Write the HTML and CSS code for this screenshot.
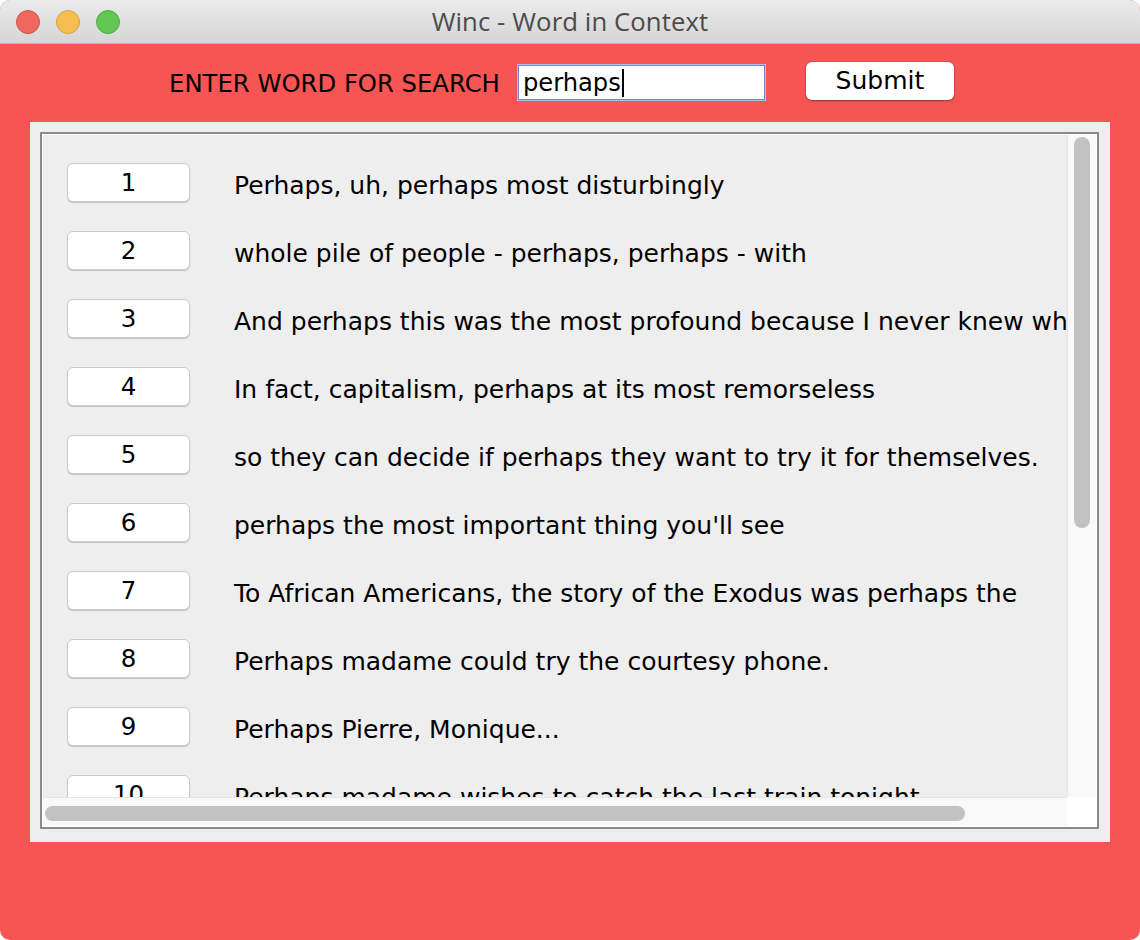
FILE: index.html
```html
<!DOCTYPE html>
<html>
<head>
<meta charset="utf-8">
<title>Winc - Word in Context</title>
<link rel="stylesheet" href="styles.css">
</head>
<body>
<div class="window">
  <div class="titlebar">
    <div class="lights">
      <span class="light red"></span>
      <span class="light yellow"></span>
      <span class="light green"></span>
    </div>
    <div class="title">Winc - Word in Context</div>
    <div></div>
  </div>
  <div class="search">
    <span class="label">ENTER WORD FOR SEARCH</span>
    <div class="input"><span>perhaps</span><span class="caret"></span></div>
    <button class="submit">Submit</button>
  </div>
  <div class="panel">
    <div class="scrollpane">
      <div class="viewport">
        <div class="row"><button class="num">1</button><span class="text">Perhaps, uh, perhaps most disturbingly</span></div>
        <div class="row"><button class="num">2</button><span class="text">whole pile of people - perhaps, perhaps - with</span></div>
        <div class="row"><button class="num">3</button><span class="text">And perhaps this was the most profound because I never knew what it meant</span></div>
        <div class="row"><button class="num">4</button><span class="text">In fact, capitalism, perhaps at its most remorseless</span></div>
        <div class="row"><button class="num">5</button><span class="text">so they can decide if perhaps they want to try it for themselves.</span></div>
        <div class="row"><button class="num">6</button><span class="text">perhaps the most important thing you'll see</span></div>
        <div class="row"><button class="num">7</button><span class="text">To African Americans, the story of the Exodus was perhaps the</span></div>
        <div class="row"><button class="num">8</button><span class="text">Perhaps madame could try the courtesy phone.</span></div>
        <div class="row"><button class="num">9</button><span class="text">Perhaps Pierre, Monique...</span></div>
        <div class="row"><button class="num">10</button><span class="text">Perhaps madame wishes to catch the last train tonight.</span></div>
      </div>
      <div class="vbar"><div class="vthumb"></div></div>
      <div class="hbar"><div class="hthumb"></div></div>
      <div class="corner"></div>
    </div>
  </div>
</div>
</body>
</html>
```

FILE: styles.css
```css
html, body {
  margin: 0;
  padding: 0;
  background: #ffffff;
}

body {
  font-family: "DejaVu Sans", "Liberation Sans", sans-serif;
  color: #000;
}

.window {
  width: 1140px;
  height: 940px;
  border-radius: 10px;
  overflow: hidden;
  background: #f75454;
  display: flex;
  flex-direction: column;
}

.titlebar {
  height: 43px;
  flex: none;
  background: linear-gradient(#ebebeb, #d5d5d5);
  border-bottom: 1px solid #b8b8b8;
  display: grid;
  grid-template-columns: 1fr auto 1fr;
  align-items: center;
}

.lights {
  display: flex;
  gap: 16px;
  padding-left: 16px;
}

.light {
  width: 22px;
  height: 22px;
  border-radius: 50%;
  display: block;
}

.light.red { background: #ee6a5f; border: 1px solid #d3524a; }
.light.yellow { background: #f6be50; border: 1px solid #d9a240; }
.light.green { background: #62c655; border: 1px solid #4fa940; }

.title {
  font-family: "Open Sans", "Liberation Sans", sans-serif;
  font-size: 25.7px;
  color: #4b4b4b;
  letter-spacing: 0.1px;
}

.search {
  height: 78px;
  flex: none;
  display: flex;
  align-items: center;
  justify-content: center;
  padding-right: 17px;
  padding-bottom: 5px;
  box-sizing: border-box;
}

.label {
  font-size: 24.3px;
  margin-right: 18px;
  margin-top: 5px;
}

.input {
  background: #fff;
  border: 1px solid #7d86c4;
  box-shadow: 0 0 0 1px #a8c2ee;
  display: flex;
  align-items: center;
  padding-left: 4px;
  margin-right: 41px;
  margin-top: 4px;
  font-size: 24.2px;
  box-sizing: border-box;
  width: 247px;
  height: 35px;
}

.caret {
  width: 2px;
  height: 28px;
  background: #000;
  margin-left: 1px;
}

.submit {
  width: 148px;
  height: 38px;
  background: #fff;
  border: none;
  border-radius: 6px;
  box-shadow: 0 1px 2px rgba(0, 0, 0, 0.35), 0 0 0 0.5px rgba(0, 0, 0, 0.15);
  font-family: inherit;
  font-size: 25px;
  color: #000;
  padding: 0;
}

.panel {
  margin: 0 30px;
  height: 720px;
  background: #eeeeee;
  padding: 10px 11px 13px 10px;
  box-sizing: border-box;
}

.scrollpane {
  height: 100%;
  border: 2px solid #8a8a8a;
  box-shadow: inset 0 0 0 1px #ffffff;
  padding: 1px;
  box-sizing: border-box;
  display: grid;
  grid-template-columns: 1fr 29px;
  grid-template-rows: 1fr 29px;
  background: #eeeeee;
}

.viewport {
  overflow: hidden;
  padding: 28px 0 0 24px;
  background: #eeeeee;
}

.row {
  display: flex;
  align-items: center;
  height: 38px;
  margin-bottom: 30px;
  white-space: nowrap;
}

.num {
  flex: none;
  width: 123px;
  height: 39px;
  background: #fff;
  border: 1px solid #cbcbcb;
  border-radius: 6px;
  box-shadow: 0 1px 1px rgba(0, 0, 0, 0.18);
  font-family: inherit;
  font-size: 24.5px;
  color: #000;
  padding: 0;
  margin-right: 44px;
}

.text {
  font-size: 25px;
  margin-top: 6px;
}

.vbar {
  background: #f9f9f9;
  border-left: 1px solid #e6e6e6;
  position: relative;
}

.vthumb {
  position: absolute;
  left: 6px;
  top: 2px;
  width: 16px;
  height: 391px;
  border-radius: 8px;
  background: #c2c2c2;
}

.hbar {
  background: #f9f9f9;
  border-top: 1px solid #e6e6e6;
  position: relative;
}

.hthumb {
  position: absolute;
  left: 2px;
  top: 8px;
  height: 15px;
  width: 920px;
  border-radius: 8px;
  background: #c2c2c2;
}

.corner {
  background: #ffffff;
}
```
